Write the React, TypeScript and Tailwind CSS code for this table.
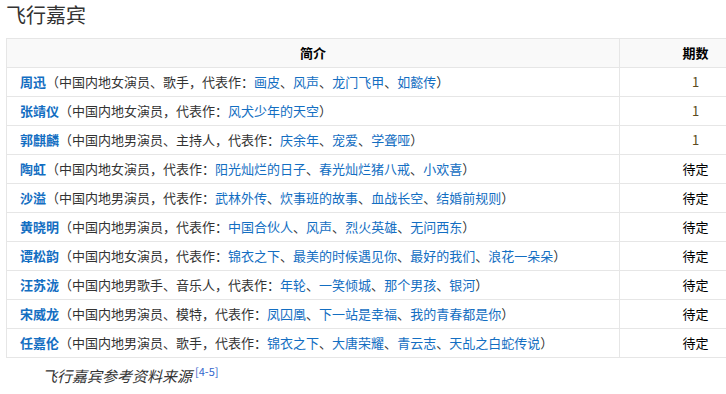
import React from "react";

type Row = { name: string; desc: string; works: string[]; ep: string };

const rows: Row[] = [
  { name: "周迅", desc: "中国内地女演员、歌手", works: ["画皮", "风声", "龙门飞甲", "如懿传"], ep: "1" },
  { name: "张靖仪", desc: "中国内地女演员", works: ["风犬少年的天空"], ep: "1" },
  { name: "郭麒麟", desc: "中国内地男演员、主持人", works: ["庆余年", "宠爱", "学聋哑"], ep: "1" },
  { name: "陶虹", desc: "中国内地女演员", works: ["阳光灿烂的日子", "春光灿烂猪八戒", "小欢喜"], ep: "待定" },
  { name: "沙溢", desc: "中国内地男演员", works: ["武林外传", "炊事班的故事", "血战长空", "结婚前规则"], ep: "待定" },
  { name: "黄晓明", desc: "中国内地男演员", works: ["中国合伙人", "风声", "烈火英雄", "无问西东"], ep: "待定" },
  { name: "谭松韵", desc: "中国内地女演员", works: ["锦衣之下", "最美的时候遇见你", "最好的我们", "浪花一朵朵"], ep: "待定" },
  { name: "汪苏泷", desc: "中国内地男歌手、音乐人", works: ["年轮", "一笑倾城", "那个男孩", "银河"], ep: "待定" },
  { name: "宋威龙", desc: "中国内地男演员、模特", works: ["凤囚凰", "下一站是幸福", "我的青春都是你"], ep: "待定" },
  { name: "任嘉伦", desc: "中国内地男演员、歌手", works: ["锦衣之下", "大唐荣耀", "青云志", "天乩之白蛇传说"], ep: "待定" },
];

export default function App() {
  return (
    <div
      className="w-[726px] h-[394px] overflow-hidden bg-white text-[#333]"
      style={{ fontFamily: '"Noto Sans CJK SC", "Liberation Sans", sans-serif' }}
    >
      <div className="pl-[6px] pt-[2px] h-[38px] text-[20px] leading-[26px] text-[#333]">飞行嘉宾</div>
      <table className="ml-[6px] w-[766px] border-collapse text-[13px]">
        <thead>
          <tr className="h-[29px] bg-[#f9f9f9]">
            <th className="border border-[#e6e6e6] font-bold text-black p-0">简介</th>
            <th className="border border-[#e6e6e6] font-bold text-black p-0 w-[152px]">期数</th>
          </tr>
        </thead>
        <tbody>
          {rows.map((r) => (
            <tr key={r.name} className="h-[29px]">
              <td className="border border-[#e6e6e6] pl-[13px] p-0 whitespace-nowrap">
                <span className="font-bold text-[#136ec2]">{r.name}</span>
                <span>（{r.desc}，代表作：</span>
                {r.works.map((w, i) => (
                  <React.Fragment key={w}>
                    {i > 0 && <span>、</span>}
                    <span className="text-[#136ec2]">{w}</span>
                  </React.Fragment>
                ))}
                <span>）</span>
              </td>
              <td className={`border border-[#e6e6e6] p-0 text-center ${r.ep === "1" ? "text-[#5c4a20]" : "text-black"}`}>
                {r.ep}
              </td>
            </tr>
          ))}
        </tbody>
      </table>
      <div className="pl-[42px] pt-[8px] text-[15px] italic text-[#333] leading-[20px]">
        飞行嘉宾参考资料来源
        <sup className="ml-[3px] text-[11px] not-italic text-[#3366cc] top-[-6px]">[4-5]</sup>
      </div>
    </div>
  );
}
